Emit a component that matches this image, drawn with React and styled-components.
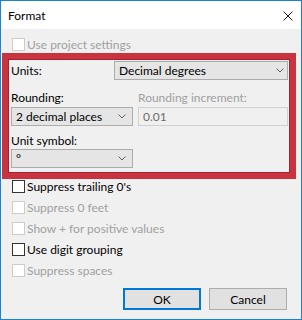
import React from "react";
import styled, { createGlobalStyle } from "styled-components";

const Global = createGlobalStyle`
  html, body { margin: 0; padding: 0; background: #ffffff; }
  * { box-sizing: border-box; }
`;

const Window = styled.div`
  width: 302px;
  height: 320px;
  border: 1px solid #1883d7;
  display: flex;
  flex-direction: column;
  font-family: Lato, "Noto Sans", sans-serif;
  font-size: 12px;
  color: #000;
  background: #f0f0f0;
`;

const TitleBar = styled.div`
  height: 28px;
  background: #ffffff;
  display: flex;
  align-items: center;
  justify-content: space-between;
  padding: 1px 8px 0 7px;
`;

const Title = styled.span`
  font-size: 12px;
`;

const Body = styled.div`
  flex: 1;
  display: flex;
  flex-direction: column;
  padding: 9px 5px 0 1px;
`;

const CheckRow = styled.label`
  display: flex;
  align-items: center;
  gap: 2px;
  height: 13px;
  padding-left: 10px;
  margin-bottom: ${(p) => p.$mb ?? 8}px;
  color: ${(p) => (p.$disabled ? "#a0a0a0" : "#000")};
`;

const Box = styled.span`
  width: 13px;
  height: 13px;
  flex: none;
  background: #fff;
  border: 1px solid ${(p) => (p.$disabled ? "#cccccc" : "#333333")};
`;

const Highlight = styled.div`
  margin-top: 2px;
  margin-bottom: 1px;
  height: 126px;
  border: 6px solid #c9323f;
  box-shadow: inset 0 0 0 1px #a5222e;
  padding: 2px 1px 0 3px;
  display: grid;
  grid-template-columns: 103px 19px 5px 150px;
  grid-template-rows: 19px 27px 19px 23px 19px;
  align-items: center;
`;

const Label = styled.span`
  grid-column: ${(p) => p.$col || "1"};
  grid-row: ${(p) => p.$row};
  color: ${(p) => (p.$disabled ? "#a0a0a0" : "#000")};
  align-self: ${(p) => p.$align || "center"};
  padding-bottom: ${(p) => p.$pb || 0}px;
  line-height: 16px;
`;

const Combo = styled.div`
  grid-column: ${(p) => p.$col};
  grid-row: ${(p) => p.$row};
  height: 19px;
  display: flex;
  align-items: center;
  justify-content: space-between;
  padding: 0 ${(p) => p.$pr ?? 6}px 0 4px;
  background: #e5e5e5;
  border: 1px solid #acacac;
`;

const TextBox = styled.div`
  grid-column: 4;
  grid-row: 3;
  height: 19px;
  display: flex;
  align-items: center;
  padding: 0 4px;
  background: #f0f0f0;
  border: 1px solid #d0d0d0;
  color: #6d6d6d;
`;

const Buttons = styled.div`
  display: flex;
  justify-content: flex-end;
  gap: 8px;
  margin-top: 11px;
  padding-right: 9px;
`;

const Button = styled.div`
  width: 78px;
  height: 22px;
  display: flex;
  align-items: center;
  justify-content: center;
  background: #e1e1e1;
  border: ${(p) => (p.$default ? "2px solid #0078d7" : "1px solid #adadad")};
`;

const Chevron = () => (
  <svg width="8" height="5" viewBox="0 0 8 5">
    <path d="M0.5 0.5 L4 4 L7.5 0.5" fill="none" stroke="#606060" strokeWidth="1" />
  </svg>
);

const CloseIcon = () => (
  <svg width="10" height="10" viewBox="0 0 10 10">
    <path d="M0.5 0.5 L9.5 9.5 M9.5 0.5 L0.5 9.5" stroke="#222" strokeWidth="1" />
  </svg>
);

const Check = ({ children, disabled, mb }) => (
  <CheckRow $disabled={disabled} $mb={mb}>
    <Box $disabled={disabled} />
    {children}
  </CheckRow>
);

export default function App() {
  return (
    <>
      <Global />
      <Window>
        <TitleBar>
          <Title>Format</Title>
          <CloseIcon />
        </TitleBar>
        <Body>
          <Check disabled mb={0}>Use project settings</Check>
          <Highlight>
            <Label $row={1}>Units:</Label>
            <Combo $col="2 / 5" $row={1} $pr={3}>
              <span>Decimal degrees</span>
              <Chevron />
            </Combo>
            <Label $row={2} $align="end" $pb={1}>Rounding:</Label>
            <Label $row={2} $col="4" $align="end" $pb={1} $disabled>
              Rounding increment:
            </Label>
            <Combo $col="1 / 3" $row={3}>
              <span>2 decimal places</span>
              <Chevron />
            </Combo>
            <TextBox>0.01</TextBox>
            <Label $row={4} $align="end">Unit symbol:</Label>
            <Combo $col="1 / 3" $row={5}>
              <span>°</span>
              <Chevron />
            </Combo>
          </Highlight>
          <Check>Suppress trailing 0's</Check>
          <Check disabled>Suppress 0 feet</Check>
          <Check disabled>Show + for positive values</Check>
          <Check>Use digit grouping</Check>
          <Check disabled mb={0}>Suppress spaces</Check>
          <Buttons>
            <Button $default>OK</Button>
            <Button>Cancel</Button>
          </Buttons>
        </Body>
      </Window>
    </>
  );
}
